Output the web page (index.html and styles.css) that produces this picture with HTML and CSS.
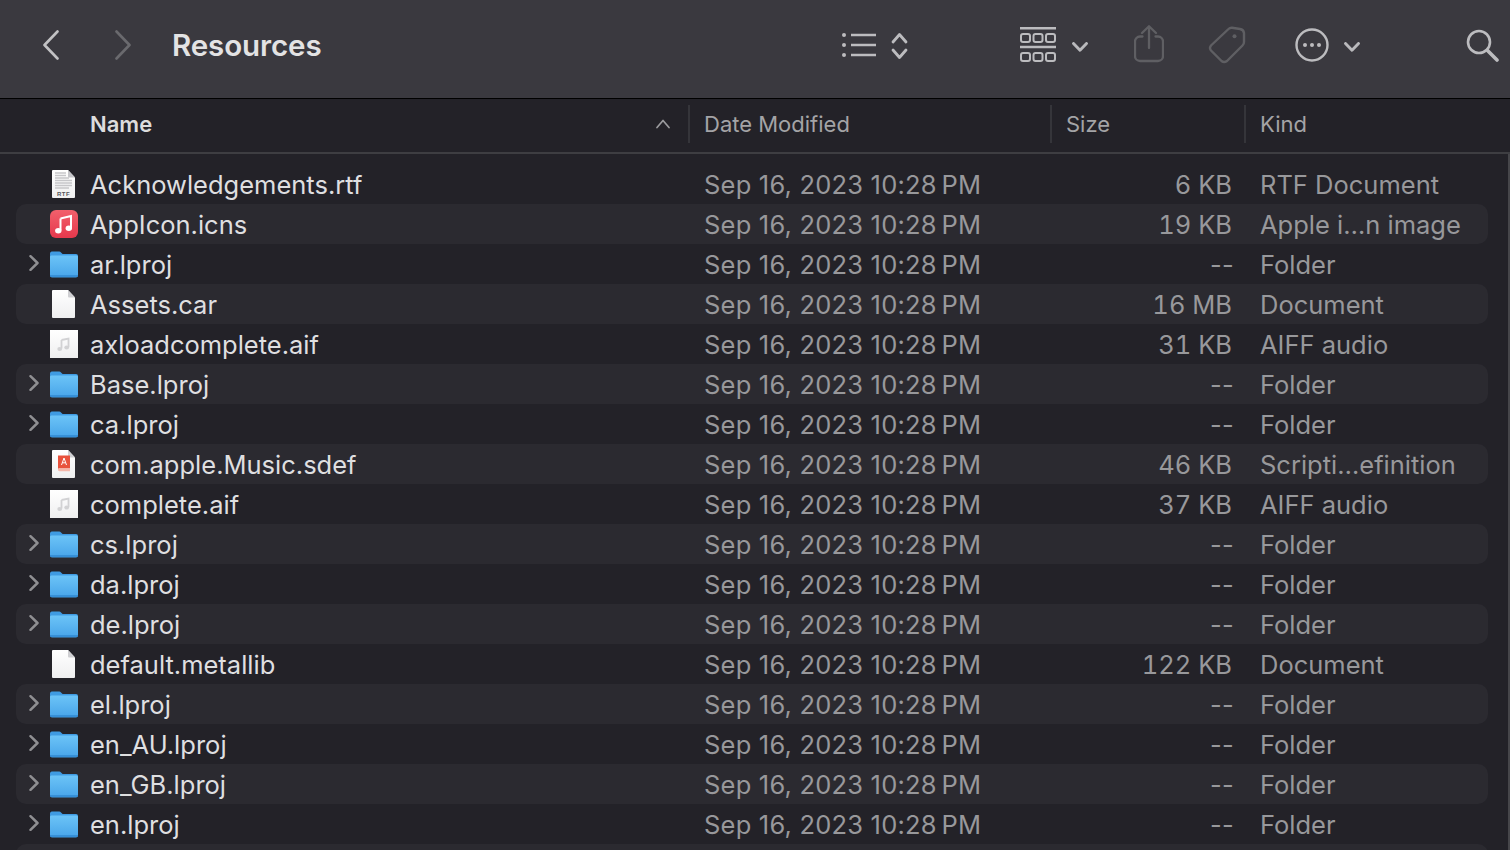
FILE: index.html
```html
<!DOCTYPE html>
<html lang="en">
<head>
<meta charset="utf-8">
<title>Resources</title>
<link rel="stylesheet" href="styles.css">
</head>
<body>
<svg class="defs" width="0" height="0" aria-hidden="true">
  <defs>
    <linearGradient id="gf" x1="0" y1="0" x2="0" y2="1"><stop offset="0" stop-color="#6cc4f7"/><stop offset="1" stop-color="#4aa6ea"/></linearGradient>
    <linearGradient id="gm" x1="0" y1="0" x2="0" y2="1"><stop offset="0" stop-color="#f2606c"/><stop offset="1" stop-color="#e5384c"/></linearGradient>
    <linearGradient id="gp" x1="0" y1="0" x2="0" y2="1"><stop offset="0" stop-color="#ffffff"/><stop offset="1" stop-color="#efeff0"/></linearGradient>
    <symbol id="folder" viewBox="0 0 28 28">
      <path d="M0 3.500C0 2.500.8 1.500 1.800 1.500h7.400c.8 0 1.200.3 1.800.9L12.600 4H26c1.200 0 2 .8 2 2v19.500c0 1.100-.8 2-2 2H2c-1.200 0-2-.9-2-2z" fill="#3f9be2"/>
      <path d="M0 7c0-1 .8-1.500 1.800-1.500h24.400C27.200 5.500 28 6 28 7v17.500c0 1-.8 1.700-1.800 1.700H1.800C.8 26.200 0 25.500 0 24.500z" fill="url(#gf)"/>
      <rect x="0" y="25.300" width="28" height="1.300" fill="#2f86cf"/>
    </symbol>
    <symbol id="doc" viewBox="0 0 28 28">
      <path d="M3 0h15l7 7.500V27a1 1 0 0 1-1 1H3a1 1 0 0 1-1-1V1a1 1 0 0 1 1-1z" fill="url(#gp)"/>
      <path d="M18 0l7 7.500h-6a1 1 0 0 1-1-1z" fill="#cfcfd2"/>
    </symbol>
    <symbol id="rtf" viewBox="0 0 28 28">
      <path d="M3 0h15l7 7.500V27a1 1 0 0 1-1 1H3a1 1 0 0 1-1-1V1a1 1 0 0 1 1-1z" fill="url(#gp)"/>
      <path d="M18 0l7 7.500h-6a1 1 0 0 1-1-1z" fill="#c4c4c8"/>
      <path d="M5 3h11M5 5.500h11M5 8h14M5 10.500h17M5 13h17M5 15.500h17M5 18h14" stroke="#c6c6c9" stroke-width="1.300"/>
      <text x="13.500" y="26" class="rtf-label">RTF</text>
    </symbol>
    <symbol id="music" viewBox="0 0 28 28">
      <rect width="28" height="28" rx="6" fill="url(#gm)"/>
      <path d="M10.500 8.500L21 6v12" fill="none" stroke="#fff" stroke-width="2"/>
      <path d="M10.500 8.500V20.500" fill="none" stroke="#fff" stroke-width="2"/>
      <ellipse cx="8.300" cy="20.800" rx="3.200" ry="2.700" fill="#fff"/>
      <ellipse cx="18.800" cy="18.300" rx="3.200" ry="2.700" fill="#fff"/>
    </symbol>
    <symbol id="aiff" viewBox="0 0 28 28">
      <rect width="28" height="28" fill="url(#gp)"/>
      <path d="M11.500 10l7-1.500v8.500M11.500 10v8.500" fill="none" stroke="#d2d2d4" stroke-width="1.800"/>
      <ellipse cx="9.700" cy="19" rx="2.400" ry="2" fill="#d2d2d4"/>
      <ellipse cx="16.700" cy="17.500" rx="2.400" ry="2" fill="#d2d2d4"/>
    </symbol>
    <symbol id="sdef" viewBox="0 0 28 28">
      <path d="M3 0h15l7 7.500V27a1 1 0 0 1-1 1H3a1 1 0 0 1-1-1V1a1 1 0 0 1 1-1z" fill="url(#gp)"/>
      <path d="M18 0l7 7.500h-6a1 1 0 0 1-1-1z" fill="#cfcfd2"/>
      <path d="M8 5.500h12v13H9.500c-.9 0-1.500.4-1.500 1.100z" fill="#e8523c"/>
      <path d="M8 19.500c0-.9.600-1.300 1.500-1.300H20v3H9.500C8.600 21.200 8 20.600 8 19.500z" fill="#f5b7aa"/>
      <path d="M11.500 15l2.500-7 2.500 7M12.500 12.800h3" fill="none" stroke="#fff" stroke-width="1"/>
    </symbol>
    <symbol id="disc" viewBox="0 0 10 16">
      <path d="M1.500 1.200L8.500 8l-7 6.800" fill="none" stroke="#8f8f92" stroke-width="2.500" stroke-linecap="round" stroke-linejoin="round"/>
    </symbol>
    <symbol id="drop" viewBox="0 0 16 10">
      <path d="M1.500 1.500L8 8.300l6.500-6.800" fill="none" stroke="#b9b9bc" stroke-width="2.900" stroke-linecap="round" stroke-linejoin="round"/>
    </symbol>
  </defs>
</svg>

<header class="toolbar">
  <svg class="tb back" width="18" height="30" viewBox="0 0 18 30"><path d="M15.500 1.500L2.500 15l13 13.500" fill="none" stroke="#c2c2c4" stroke-width="2.600" stroke-linecap="round" stroke-linejoin="round"/></svg>
  <svg class="tb forward" width="18" height="30" viewBox="0 0 18 30"><path d="M2.500 1.500L15.500 15l-13 13.500" fill="none" stroke="#6a6a6e" stroke-width="2.600" stroke-linecap="round" stroke-linejoin="round"/></svg>
  <h1 class="title">Resources</h1>
  <svg class="tb view-list" width="34" height="24" viewBox="0 0 34 24">
    <circle cx="2" cy="2" r="2" fill="#bcbcbf"/><circle cx="2" cy="12" r="2" fill="#bcbcbf"/><circle cx="2" cy="22" r="2" fill="#bcbcbf"/>
    <path d="M9 2h25M9 12h25M9 22h25" stroke="#bcbcbf" stroke-width="2.400"/>
  </svg>
  <svg class="tb updown" width="17" height="28" viewBox="0 0 17 28">
    <path d="M2 10l6.500-7.500L15 10M2 18l6.500 7.500L15 18" fill="none" stroke="#bcbcbf" stroke-width="2.800" stroke-linecap="round" stroke-linejoin="round"/>
  </svg>
  <svg class="tb gallery" width="36" height="36" viewBox="0 0 36 36">
    <path d="M0 1.200h36M0 20h36" stroke="#bcbcbf" stroke-width="2.400"/>
    <g fill="none" stroke="#bcbcbf" stroke-width="2"><rect x="1" y="7" width="9" height="8" rx="2"/><rect x="13.500" y="7" width="9" height="8" rx="2"/><rect x="26" y="7" width="9" height="8" rx="2"/><rect x="1" y="26" width="9" height="8" rx="2"/><rect x="13.500" y="26" width="9" height="8" rx="2"/><rect x="26" y="26" width="9" height="8" rx="2"/></g>
  </svg>
  <svg class="tb drop-a" width="16" height="10"><use href="#drop"/></svg>
  <svg class="tb share" width="30" height="38" viewBox="0 0 30 38">
    <path d="M8.500 11.500H6a5 5 0 0 0-5 5V31a5 5 0 0 0 5 5h18a5 5 0 0 0 5-5V16.500a5 5 0 0 0-5-5h-2.500M15 23V1.500M8 8L15 1.200 22 8" fill="none" stroke="#5f5f63" stroke-width="2.300" stroke-linecap="round" stroke-linejoin="round"/>
  </svg>
  <svg class="tb tag" width="38" height="38" viewBox="0 0 38 38">
    <path d="M20.500 3Q22 1.500 24 1.700L32 3Q35.500 3.500 36 7V16Q36 18 34.500 19.500L19 35Q16 37 13.500 35L3 24.500Q1 22 3 19.500Z" fill="none" stroke="#5f5f63" stroke-width="2.400" stroke-linejoin="round"/>
    <circle cx="26.500" cy="10.300" r="2" fill="#5f5f63"/>
  </svg>
  <svg class="tb more" width="34" height="34" viewBox="0 0 34 34">
    <circle cx="17" cy="17" r="15.500" fill="none" stroke="#bcbcbf" stroke-width="2.400"/>
    <circle cx="10" cy="17" r="2" fill="#bcbcbf"/><circle cx="17" cy="17" r="2" fill="#bcbcbf"/><circle cx="24" cy="17" r="2" fill="#bcbcbf"/>
  </svg>
  <svg class="tb drop-b" width="16" height="10"><use href="#drop"/></svg>
  <svg class="tb search" width="33" height="33" viewBox="0 0 33 33">
    <circle cx="13" cy="13" r="11" fill="none" stroke="#bcbcbf" stroke-width="2.600"/>
    <path d="M21.500 21.500L31 31" stroke="#bcbcbf" stroke-width="3.600" stroke-linecap="round"/>
  </svg>
</header>

<div class="columns">
  <div class="col col-name"><span class="name-label">Name</span>
    <svg class="sort" width="14" height="10" viewBox="0 0 14 10"><path d="M1 8.500l6-7 6 7" fill="none" stroke="#9b9b9e" stroke-width="1.700" stroke-linecap="round" stroke-linejoin="round"/></svg>
  </div>
  <div class="col col-date">Date Modified</div>
  <div class="col col-size">Size</div>
  <div class="col col-kind">Kind</div>
</div>

<main class="list">
  <div class="row"><span></span><svg class="ico"><use href="#rtf"/></svg><span class="name">Acknowledgements.rtf</span><span class="date">Sep 16, 2023 10:28&#8201;PM</span><span class="size">6 KB</span><span class="kind">RTF Document</span></div>
  <div class="row"><span></span><svg class="ico"><use href="#music"/></svg><span class="name">AppIcon.icns</span><span class="date">Sep 16, 2023 10:28&#8201;PM</span><span class="size">19 KB</span><span class="kind">Apple i…n image</span></div>
  <div class="row"><svg class="chev"><use href="#disc"/></svg><svg class="ico"><use href="#folder"/></svg><span class="name">ar.lproj</span><span class="date">Sep 16, 2023 10:28&#8201;PM</span><span class="size none">--</span><span class="kind">Folder</span></div>
  <div class="row"><span></span><svg class="ico"><use href="#doc"/></svg><span class="name">Assets.car</span><span class="date">Sep 16, 2023 10:28&#8201;PM</span><span class="size">16 MB</span><span class="kind">Document</span></div>
  <div class="row"><span></span><svg class="ico"><use href="#aiff"/></svg><span class="name">axloadcomplete.aif</span><span class="date">Sep 16, 2023 10:28&#8201;PM</span><span class="size">31 KB</span><span class="kind">AIFF audio</span></div>
  <div class="row"><svg class="chev"><use href="#disc"/></svg><svg class="ico"><use href="#folder"/></svg><span class="name">Base.lproj</span><span class="date">Sep 16, 2023 10:28&#8201;PM</span><span class="size none">--</span><span class="kind">Folder</span></div>
  <div class="row"><svg class="chev"><use href="#disc"/></svg><svg class="ico"><use href="#folder"/></svg><span class="name">ca.lproj</span><span class="date">Sep 16, 2023 10:28&#8201;PM</span><span class="size none">--</span><span class="kind">Folder</span></div>
  <div class="row"><span></span><svg class="ico"><use href="#sdef"/></svg><span class="name">com.apple.Music.sdef</span><span class="date">Sep 16, 2023 10:28&#8201;PM</span><span class="size">46 KB</span><span class="kind">Scripti…efinition</span></div>
  <div class="row"><span></span><svg class="ico"><use href="#aiff"/></svg><span class="name">complete.aif</span><span class="date">Sep 16, 2023 10:28&#8201;PM</span><span class="size">37 KB</span><span class="kind">AIFF audio</span></div>
  <div class="row"><svg class="chev"><use href="#disc"/></svg><svg class="ico"><use href="#folder"/></svg><span class="name">cs.lproj</span><span class="date">Sep 16, 2023 10:28&#8201;PM</span><span class="size none">--</span><span class="kind">Folder</span></div>
  <div class="row"><svg class="chev"><use href="#disc"/></svg><svg class="ico"><use href="#folder"/></svg><span class="name">da.lproj</span><span class="date">Sep 16, 2023 10:28&#8201;PM</span><span class="size none">--</span><span class="kind">Folder</span></div>
  <div class="row"><svg class="chev"><use href="#disc"/></svg><svg class="ico"><use href="#folder"/></svg><span class="name">de.lproj</span><span class="date">Sep 16, 2023 10:28&#8201;PM</span><span class="size none">--</span><span class="kind">Folder</span></div>
  <div class="row"><span></span><svg class="ico"><use href="#doc"/></svg><span class="name">default.metallib</span><span class="date">Sep 16, 2023 10:28&#8201;PM</span><span class="size">122 KB</span><span class="kind">Document</span></div>
  <div class="row"><svg class="chev"><use href="#disc"/></svg><svg class="ico"><use href="#folder"/></svg><span class="name">el.lproj</span><span class="date">Sep 16, 2023 10:28&#8201;PM</span><span class="size none">--</span><span class="kind">Folder</span></div>
  <div class="row"><svg class="chev"><use href="#disc"/></svg><svg class="ico"><use href="#folder"/></svg><span class="name">en_AU.lproj</span><span class="date">Sep 16, 2023 10:28&#8201;PM</span><span class="size none">--</span><span class="kind">Folder</span></div>
  <div class="row"><svg class="chev"><use href="#disc"/></svg><svg class="ico"><use href="#folder"/></svg><span class="name">en_GB.lproj</span><span class="date">Sep 16, 2023 10:28&#8201;PM</span><span class="size none">--</span><span class="kind">Folder</span></div>
  <div class="row"><svg class="chev"><use href="#disc"/></svg><svg class="ico"><use href="#folder"/></svg><span class="name">en.lproj</span><span class="date">Sep 16, 2023 10:28&#8201;PM</span><span class="size none">--</span><span class="kind">Folder</span></div>
  <div class="row"></div>
</main>
</body>
</html>
```

FILE: styles.css
```css
* { box-sizing: border-box; }
html, body { margin: 0; height: 850px; overflow: hidden; }
body {
  background: #232228;
  font-family: Inter, "Noto Sans", "Liberation Sans", sans-serif;
  display: flex;
  flex-direction: column;
}
.defs { display: block; flex: none; }
.rtf-label { font: 700 6px "Liberation Sans", sans-serif; fill: #55555a; text-anchor: middle; letter-spacing: .5px; }

.toolbar {
  flex: none;
  height: 99px;
  background: #3a393f;
  border-bottom: 1px solid #000;
  display: flex;
  align-items: center;
  padding: 0 0 8px 42px;
}
.tb { flex: none; display: block; }
.forward { margin-left: 54px; }
.title {
  margin: 0 0 0 40px;
  width: 670px;
  flex: none;
  font-size: 29.5px;
  font-weight: 600;
  color: #e3e3e4;
  letter-spacing: -.1px;
}
.updown { margin: 2px 0 0 15px; }
.gallery { margin-left: 112px; }
.drop-a { margin: 3px 0 0 16px; }
.share { margin-left: 46px; margin-bottom: 2px; }
.tag { margin-left: 44px; }
.more { margin-left: 49px; }
.drop-b { margin: 3px 0 0 15px; }
.search { margin-left: 106px; }

.columns {
  flex: none;
  height: 55px;
  display: flex;
  align-items: center;
  border-bottom: 2px solid #3e3e42;
  padding-bottom: 3px;
  font-size: 22px;
  color: #a4a4a6;
}
.col {
  height: 38px;
  display: flex;
  align-items: center;
  padding-left: 14px;
  border-left: 2px solid #35353a;
  flex: none;
}
.col-name { width: 688px; padding: 0 18px 0 90px; border-left: 0; justify-content: space-between; }
.name-label { font-weight: 600; color: #dcdcdd; }
.col-date { width: 362px; }
.col-size { width: 194px; }
.col-kind { flex: 1; }

.list {
  flex: 1;
  min-height: 0;
  overflow: hidden;
  padding: 10px 20px 0 16px;
  border-right: 2px solid #46464a;
  font-size: 25.5px;
}
.row {
  height: 40px;
  display: grid;
  grid-template-columns: 34px 40px 614px 362px 166px 1fr;
  align-items: center;
  border-radius: 10px;
}
.row:nth-child(even) { background: #2b2a30; }
.chev { width: 10px; height: 16px; margin-left: 13px; margin-top: -2px; display: block; }
.ico { width: 28px; height: 28px; display: block; }
.name { color: #dfdfe0; white-space: nowrap; }
.date, .size, .kind { color: #98989b; white-space: nowrap; }
.date { letter-spacing: .2px; }
.size { text-align: right; font-variant-numeric: tabular-nums; }
.size.none { font-variant-numeric: normal; letter-spacing: .3px; margin-right: -2px; }
.kind { padding-left: 28px; }
```
